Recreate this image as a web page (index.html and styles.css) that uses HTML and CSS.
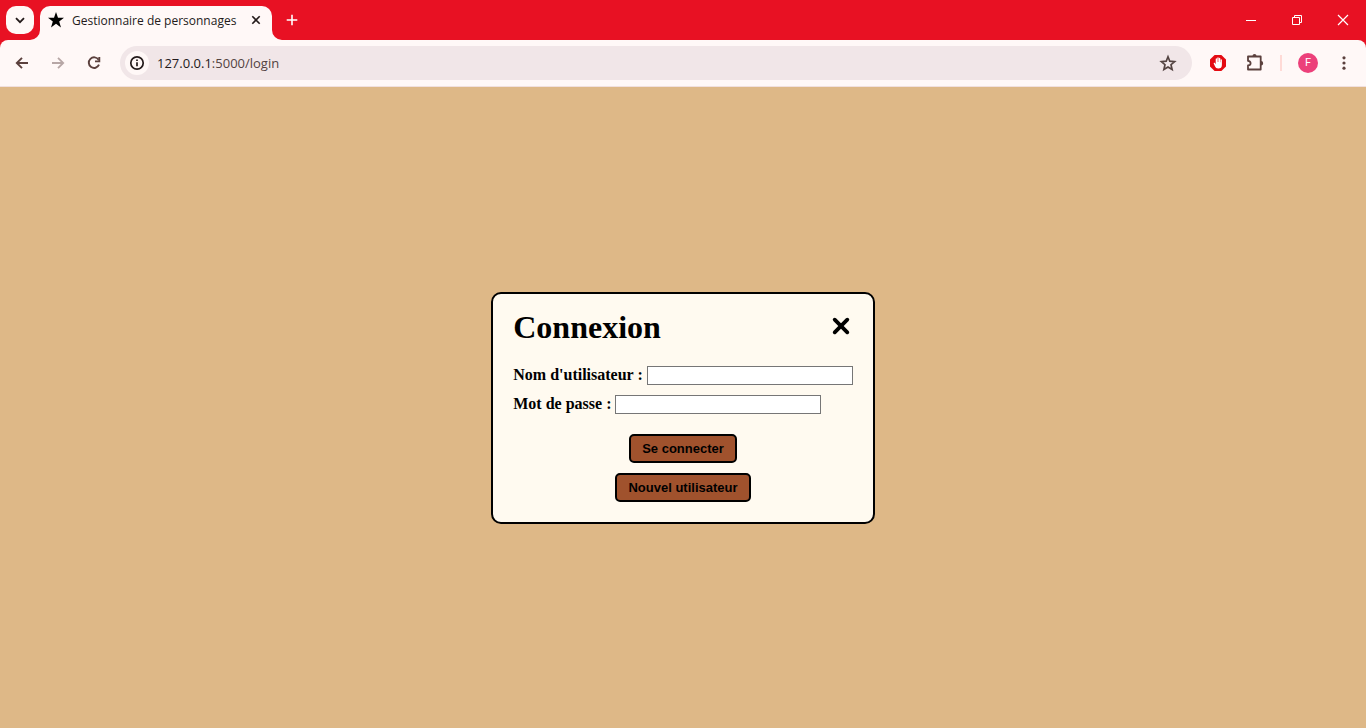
FILE: index.html
```html
<!DOCTYPE html>
<html lang="fr">
<head>
<meta charset="utf-8">
<meta name="viewport" content="width=device-width, initial-scale=1">
<title>Gestionnaire de personnages</title>
<link rel="stylesheet" href="styles.css">
</head>
<body>
<header class="browser">
  <div class="tab-strip">
    <button class="tab-search" type="button" aria-label="Rechercher dans les onglets">
      <svg width="28" height="28" viewBox="0 0 28 28" fill="none" stroke="#231a1a" stroke-width="1.8"><path d="M10 12.200l4 4 4-4"/></svg>
    </button>
    <div class="tab">
      <svg width="16" height="16" viewBox="0 0 16 16"><path d="M8 0l2 5.700h6l-4.800 3.700 1.800 6-5-3.600-5 3.600 1.800-6L0 5.700h6z"/></svg>
      <span class="tab-title">Gestionnaire de personnages</span>
      <button class="plain" type="button" aria-label="Fermer l'onglet">
        <svg width="16" height="16" viewBox="0 0 16 16" stroke="#231a1a" stroke-width="1.600"><path d="M4.300 4.300l7.400 7.400M11.700 4.300l-7.400 7.400"/></svg>
      </button>
      <svg class="flare flare-left" width="10" height="10" viewBox="0 0 10 10"><path d="M10 0v10H0A10 10 0 0 0 10 0z"/></svg>
      <svg class="flare flare-right" width="10" height="10" viewBox="0 0 10 10"><path d="M0 0v10h10A10 10 0 0 1 0 0z"/></svg>
    </div>
    <button class="plain new-tab" type="button" aria-label="Nouvel onglet">
      <svg width="16" height="16" viewBox="0 0 16 16" stroke="#fff" stroke-width="1.600"><path d="M8 2.700v10.600M2.700 8h10.600"/></svg>
    </button>
    <div class="window-controls">
      <button class="plain" type="button" aria-label="Réduire"><svg width="46" height="40" viewBox="0 0 46 40" stroke="#fff"><path d="M18 20.500h10"/></svg></button>
      <button class="plain" type="button" aria-label="Restaurer"><svg width="46" height="40" viewBox="0 0 46 40" fill="none" stroke="#fff"><path d="M18.500 17.500h7v7h-7zM20.500 17.500v-2h7v7h-2"/></svg></button>
      <button class="plain" type="button" aria-label="Fermer"><svg width="46" height="40" viewBox="0 0 46 40" stroke="#fff" stroke-width="1.200"><path d="M18 15l10 10M28 15L18 25"/></svg></button>
    </div>
  </div>
  <div class="toolbar">
    <nav class="nav-buttons">
      <button class="plain" type="button" aria-label="Retour"><svg width="16" height="16" viewBox="0 0 16 16" fill="none" stroke="#5b403d" stroke-width="1.900"><path d="M14 8H3M8 2.800L2.800 8 8 13.200"/></svg></button>
      <button class="plain" type="button" aria-label="Avancer" disabled><svg width="16" height="16" viewBox="0 0 16 16" fill="none" stroke="#b7a7a6" stroke-width="1.800"><path d="M2 8h11M8 2.800L13.200 8 8 13.200"/></svg></button>
      <button class="plain" type="button" aria-label="Actualiser"><svg width="16" height="16" viewBox="0 0 16 16" fill="none" stroke="#5b403d" stroke-width="1.900"><path d="M12.600 4.800A5.300 5.300 0 1 0 13 9.700"/><path d="M13.300 2v4.400H9"/></svg></button>
    </nav>
    <div class="omnibox">
      <button class="site-info" type="button" aria-label="Informations sur le site">
        <svg width="16" height="16" viewBox="0 0 16 16" fill="none" stroke="#231a1a" stroke-width="1.700"><circle cx="8" cy="8" r="6.200"/><path d="M8 7.200v4M8 4.400v1.600"/></svg>
      </button>
      <div class="url"><span class="host">127.0.0.1</span>:5000/login</div>
      <button class="plain" type="button" aria-label="Ajouter aux favoris">
        <svg width="18" height="18" viewBox="0 0 18 18" fill="none" stroke="#534341" stroke-width="1.700"><path d="M9 2.800l1.800 4.400 4.800.4-3.600 3.100 1.100 4.700L9 12.900l-4.100 2.500L6 10.700 2.400 7.600l4.800-.4z"/></svg>
      </button>
    </div>
    <div class="extensions">
      <button class="plain" type="button" aria-label="Bloqueur de publicités">
        <svg width="18" height="18" viewBox="0 0 18 18"><path d="M5.600 1h6.800L17 5.600v6.800L12.400 17H5.600L1 12.400V5.600z" fill="#e40b12"/><path d="M9.200 14.500c-1.700 0-2.500-.8-3.100-2L4.700 9.600c-.2-.8.800-1.100 1.200-.5l.8 1.100V5.100c0-1 1.300-1 1.300 0V8h.3V3.900c0-1 1.400-1 1.400 0V8h.3V4.400c0-1 1.300-1 1.300 0v3.800h.3V6c0-1 1.300-1 1.300 0v5c0 2.400-1.200 3.500-3.700 3.500z" fill="#fff"/></svg>
      </button>
      <button class="plain" type="button" aria-label="Extensions">
        <svg width="20" height="20" viewBox="0 0 20 20"><path d="M3 3.500h12.700v13H3v-4c1.700-.2 2.600-1 2.600-2.300S4.700 8.100 3 7.900z" fill="none" stroke="#5b403d" stroke-width="1.800" stroke-linejoin="round"/><path d="M7.500 3a2 2 0 0 1 4 0zM16 8a2.200 2.200 0 0 1 0 4.400z" fill="#5b403d"/></svg>
      </button>
      <span class="divider"></span>
      <button class="avatar" type="button">F</button>
      <button class="plain" type="button" aria-label="Menu">
        <svg width="16" height="16" viewBox="0 0 16 16" fill="#5b403d"><circle cx="8" cy="2.800" r="1.600"/><circle cx="8" cy="8" r="1.600"/><circle cx="8" cy="13.200" r="1.600"/></svg>
      </button>
    </div>
  </div>
</header>
<main class="page">
  <form class="card">
    <div class="card-head">
      <h1>Connexion</h1>
      <button class="plain close" type="button" aria-label="Fermer">
        <svg width="24" height="24" viewBox="0 0 24 24" stroke="#000" stroke-width="3.800" stroke-linecap="round"><path d="M5.700 5.700l12.600 12.600M18.300 5.700L5.700 18.300"/></svg>
      </button>
    </div>
    <div class="fields">
      <div class="field"><label for="user">Nom d'utilisateur :</label><input id="user" type="text"></div>
      <div class="field"><label for="pass">Mot de passe :</label><input id="pass" type="password"></div>
    </div>
    <div class="actions">
      <button class="action" type="submit">Se connecter</button>
      <button class="action" type="button">Nouvel utilisateur</button>
    </div>
  </form>
</main>
</body>
</html>
```
FILE: styles.css
```css
* { box-sizing: border-box; }

body {
  margin: 0;
  min-height: 100vh;
  display: flex;
  flex-direction: column;
  background: #deb887;
  font-family: "Liberation Serif", "Times New Roman", serif;
}

button { font: inherit; }

svg { display: block; }

.plain {
  padding: 0;
  border: 0;
  background: none;
}

.browser {
  background: #e81123;
  font-family: "Open Sans", "Noto Sans", sans-serif;
}

.tab-strip {
  display: flex;
  align-items: center;
  height: 40px;
  padding-left: 6px;
}

.tab-search {
  padding: 0;
  border: 0;
  border-radius: 10px;
  background: #fff8f7;
}

.tab {
  position: relative;
  align-self: flex-end;
  display: flex;
  align-items: center;
  gap: 8px;
  width: 232px;
  height: 34px;
  margin-left: 6px;
  padding: 0 8px 6px;
  border-radius: 10px 10px 0 0;
  background: #fff8f7;
}

.tab-title {
  flex: 1;
  font-size: 12px;
  color: #231a1a;
  white-space: nowrap;
}

.flare {
  position: absolute;
  bottom: 0;
  fill: #fff8f7;
}

.flare-left { right: 100%; }
.flare-right { left: 100%; }

.new-tab { margin-left: 12px; }

.window-controls {
  display: flex;
  margin-left: auto;
}

.toolbar {
  display: flex;
  align-items: center;
  height: 47px;
  padding: 0 14px;
  border-bottom: 1px solid #f1e0de;
  border-radius: 8px 8px 0 0;
  background: #fff8f7;
}

.nav-buttons {
  display: flex;
  gap: 20px;
}

.omnibox {
  flex: 1;
  display: flex;
  align-items: center;
  height: 34px;
  margin: 0 17px 0 18px;
  padding: 0 15px 0 5px;
  border-radius: 17px;
  background: #f1e6e8;
}

.site-info {
  padding: 4px;
  border: 0;
  border-radius: 50%;
  background: #fff8f7;
}

.url {
  flex: 1;
  padding-left: 8px;
  font-size: 13px;
  color: #534341;
}

.host { color: #231a1a; }

.extensions {
  display: flex;
  align-items: center;
}

.extensions .plain + .plain { margin-left: 18px; }

.divider {
  width: 2px;
  height: 16px;
  margin: 0 16px 0 15px;
  background: #ffdad6;
}

.avatar {
  width: 20px;
  height: 20px;
  margin-right: 18px;
  padding: 0;
  border: 0;
  border-radius: 50%;
  background: #ec407a;
  color: #fff;
  font: 11px/20px Roboto, sans-serif;
}

.page {
  flex: 1;
  display: flex;
  align-items: center;
  justify-content: center;
}

.card {
  padding: 16px 20px 20px;
  border: 2px solid #000;
  border-radius: 10px;
  background: #fffaf0;
}

.card-head {
  display: flex;
  justify-content: space-between;
  align-items: flex-start;
}

.card h1 {
  margin: 0;
  font-size: 32px;
  line-height: 34px;
}

.close { padding: 4px 0; }

.fields {
  display: grid;
  gap: 10px;
  margin-top: 22px;
}

.field {
  display: flex;
  align-items: flex-start;
  gap: 4px;
  font-size: 16px;
  font-weight: bold;
  line-height: 17px;
}

.field input {
  width: 206px;
  height: 19px;
  padding: 1px 2px;
  border: 1px solid #767676;
  background: #fff;
  font: 13px "Liberation Sans", Arial, sans-serif;
}

.actions {
  display: flex;
  flex-direction: column;
  align-items: center;
  gap: 10px;
  margin-top: 20px;
}

.action {
  padding: 5px 11px;
  border: 2px solid #000;
  border-radius: 5px;
  background: #a0522d;
  color: #000;
  font: bold 13px/15px "Liberation Sans", Arial, sans-serif;
}
```
